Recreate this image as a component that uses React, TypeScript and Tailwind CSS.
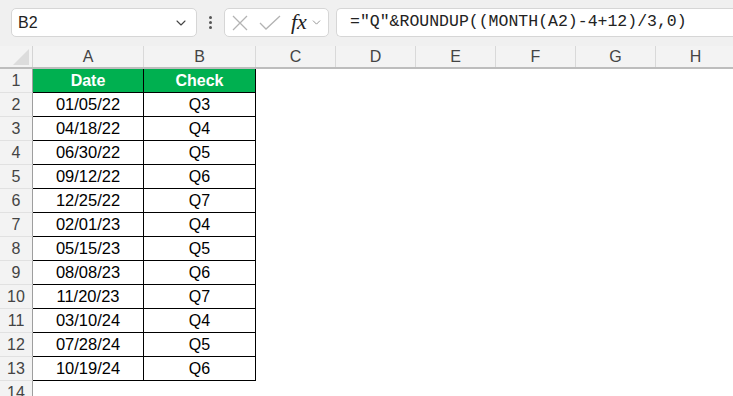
import { ChevronDown } from 'lucide-react'

const rows = [
  ['01/05/22', 'Q3'],
  ['04/18/22', 'Q4'],
  ['06/30/22', 'Q5'],
  ['09/12/22', 'Q6'],
  ['12/25/22', 'Q7'],
  ['02/01/23', 'Q4'],
  ['05/15/23', 'Q5'],
  ['08/08/23', 'Q6'],
  ['11/20/23', 'Q7'],
  ['03/10/24', 'Q4'],
  ['07/28/24', 'Q5'],
  ['10/19/24', 'Q6'],
]

const COLS = [
  { label: 'A', w: 'w-[111px]' },
  { label: 'B', w: 'w-[112px]' },
  { label: 'C', w: 'w-[80px]' },
  { label: 'D', w: 'w-[80px]' },
  { label: 'E', w: 'w-[80px]' },
  { label: 'F', w: 'w-[80px]' },
  { label: 'G', w: 'w-[80px]' },
  { label: 'H', w: 'w-[80px]' },
]

function RowNum({ n }: { n: number }) {
  return (
    <div className="w-[33px] shrink-0 h-full flex items-center justify-center bg-[#f3f3f3] border-r border-[#9e9e9e] border-b border-b-[#e1e1e1] text-[16px] text-[#444]">
      {n}
    </div>
  )
}

export default function App() {
  return (
    <div
      className="w-[733px] h-[396px] overflow-hidden bg-white"
      style={{ fontFamily: '"Liberation Sans", Arial, sans-serif' }}
    >
      {/* Formula bar */}
      <div className="h-[46px] bg-[#f0f0f0] flex items-start pt-[8px] pl-[11px] gap-0">
        <div className="w-[186px] h-[29px] bg-white border border-[#d6d6d6] rounded-[5px] flex items-center justify-between pl-[6px] pr-[7px]">
          <span className="text-[16px] text-[#222]">B2</span>
          <ChevronDown className="w-[16px] h-[16px] text-[#444]" strokeWidth={1.6} />
        </div>
        <div className="w-[27px] h-[29px] flex flex-col items-center justify-center gap-[2px]">
          <span className="w-[3px] h-[3px] bg-[#555] rounded-full" />
          <span className="w-[3px] h-[3px] bg-[#555] rounded-full" />
          <span className="w-[3px] h-[3px] bg-[#555] rounded-full" />
        </div>
        <div className="w-[105px] h-[29px] bg-white border border-[#d6d6d6] rounded-[5px] flex items-center pl-[6px]">
          <svg width="18" height="18" viewBox="0 0 18 18" className="mr-[10px]">
            <path d="M2 2 L16 16 M16 2 L2 16" stroke="#b3b3b3" strokeWidth="1.3" fill="none" />
          </svg>
          <svg width="22" height="18" viewBox="0 0 22 18" className="mr-[10px]">
            <path d="M1 9 L7 15 L21 2" stroke="#b3b3b3" strokeWidth="1.3" fill="none" />
          </svg>
          <span
            className="text-[22px] italic text-[#222] leading-none -mt-[2px]"
            style={{ fontFamily: '"Liberation Serif", "Times New Roman", serif' }}
          >
            fx
          </span>
          <ChevronDown className="w-[13px] h-[13px] text-[#888] ml-[3px]" strokeWidth={1.6} />
        </div>
        <div className="flex-1 h-[29px] ml-[7px] bg-white border border-[#d6d6d6] border-r-0 rounded-l-[5px] flex items-center pl-[13px]">
          <span
            className="text-[16.5px] text-[#222] whitespace-nowrap"
            style={{ fontFamily: '"Liberation Mono", "DejaVu Sans Mono", monospace' }}
          >
            ="Q"&amp;ROUNDUP((MONTH(A2)-4+12)/3,0)
          </span>
        </div>
      </div>

      {/* Column headers */}
      <div className="flex h-[23px] bg-[#f3f3f3] border-b-2 border-[#bdbdbd]">
        <div className="w-[33px] shrink-0 relative border-r border-[#d4d4d4]">
          <svg width="16" height="16" viewBox="0 0 16 16" className="absolute right-[3px] bottom-[2px]">
            <path d="M16 0 L16 16 L0 16 Z" fill="#dcdcdc" />
          </svg>
        </div>
        {COLS.map((c) => (
          <div
            key={c.label}
            className={`${c.w} shrink-0 flex items-center justify-center border-r border-[#d9d9d9] text-[16px] text-[#444]`}
          >
            {c.label}
          </div>
        ))}
      </div>

      {/* Header row */}
      <div className="flex h-[24px]">
        <RowNum n={1} />
        <div className="w-[111px] shrink-0 bg-[#00b050] border-r border-b border-black flex items-center justify-center text-white font-bold text-[16px]">
          Date
        </div>
        <div className="w-[112px] shrink-0 bg-[#00b050] border-r border-b border-black flex items-center justify-center text-white font-bold text-[16px]">
          Check
        </div>
        <div className="flex-1 bg-white" />
      </div>

      {rows.map(([d, q], i) => (
        <div key={i} className="flex h-[24px]">
          <RowNum n={i + 2} />
          <div className="w-[111px] shrink-0 border-r border-b border-black flex items-center justify-center text-[16.5px] text-black">
            {d}
          </div>
          <div className="w-[112px] shrink-0 border-r border-b border-black flex items-center justify-center text-[16px] text-black">
            {q}
          </div>
          <div className="flex-1 bg-white" />
        </div>
      ))}

      <div className="flex h-[24px]">
        <RowNum n={14} />
        <div className="flex-1 bg-white" />
      </div>
    </div>
  )
}
